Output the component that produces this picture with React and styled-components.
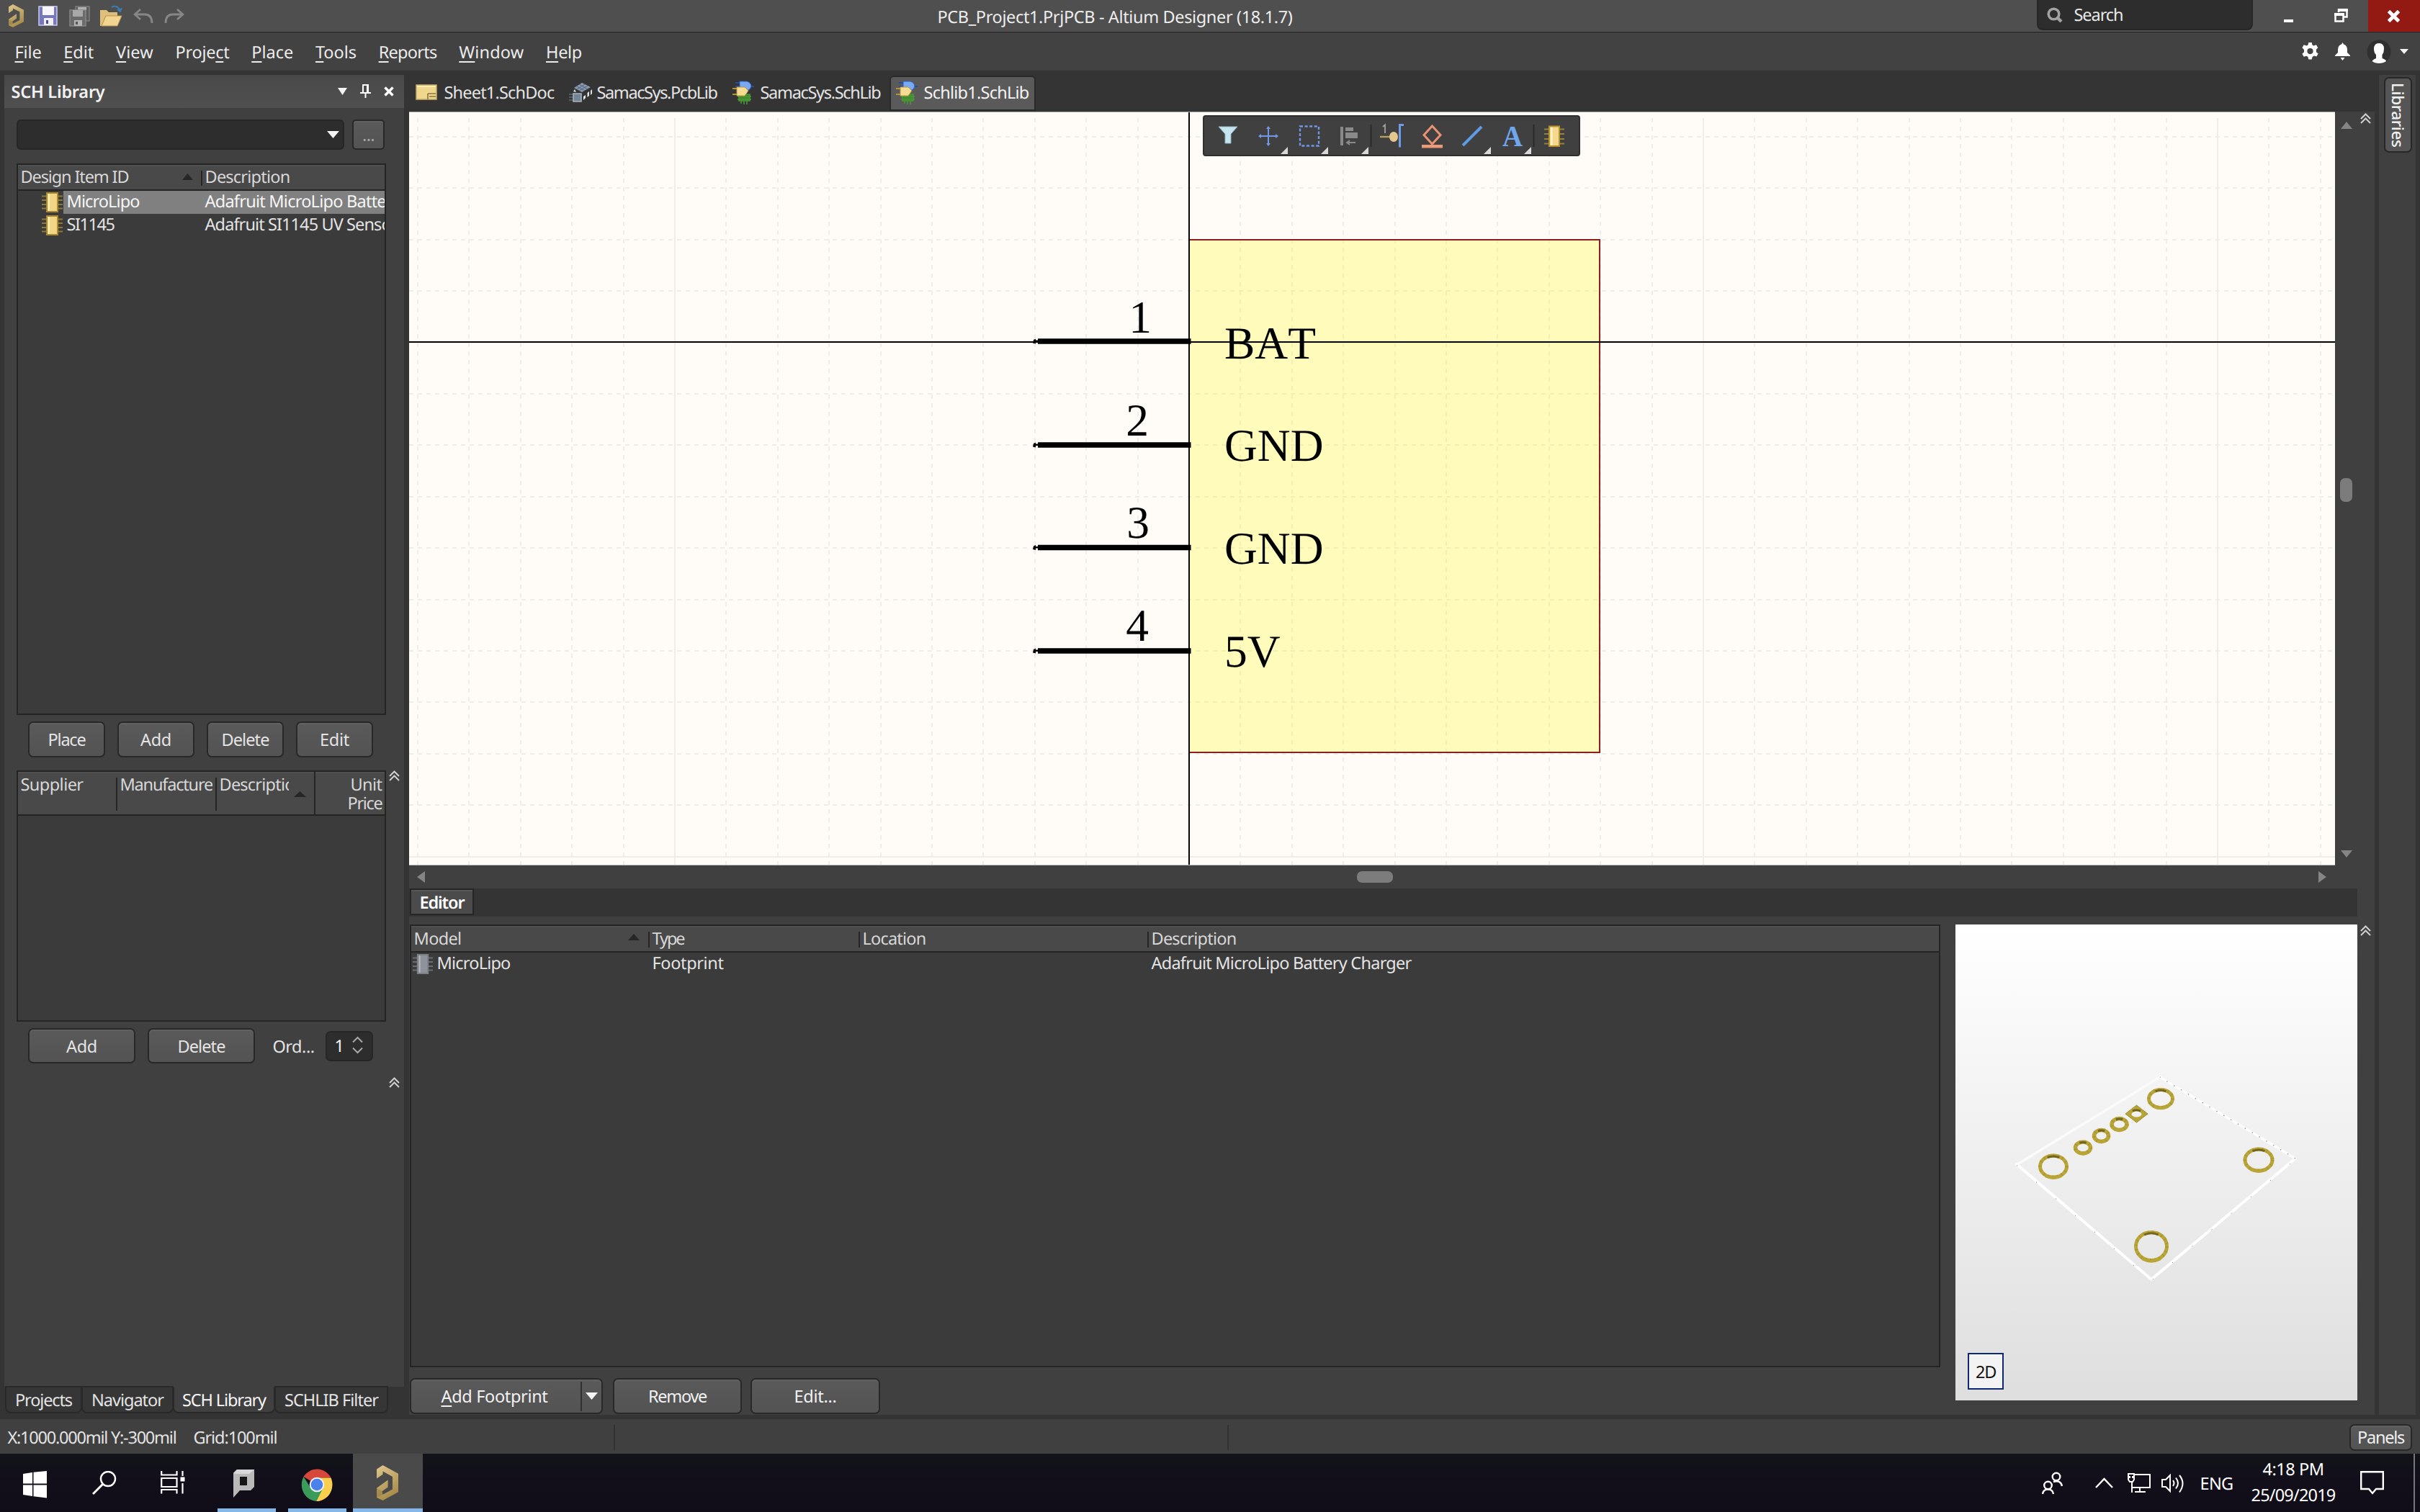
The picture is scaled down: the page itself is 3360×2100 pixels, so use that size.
import React, { useLayoutEffect, useRef, useState } from "react";
import styled, { createGlobalStyle, css } from "styled-components";

const UI = `"Noto Sans", "Open Sans", sans-serif`;

const GlobalStyle = createGlobalStyle`
  * { box-sizing: border-box; }
  html, body { margin: 0; padding: 0; background: #343434; }
  body {
    width: 3360px; height: 2100px; overflow: hidden;
    font-family: ${UI}; font-size: 23.5px; line-height: 32px; color: #e4e4e4;
    text-rendering: geometricPrecision;
  }
  svg { display: block; flex: none; }
`;

/* ---------- text ---------- */

const LabelBox = styled.span`
  display: inline-block;
  flex: none;
  white-space: nowrap;
  text-indent: -0.5px;
  font-size: ${(p) => p.$size || 23.5}px;
  font-weight: ${(p) => (p.$bold ? 600 : 400)};
  color: ${(p) => p.$color || "#e4e4e4"};
  u { text-underline-offset: 4px; text-decoration-thickness: 2px; text-decoration-skip-ink: none; }
`;

/* A caption whose tracking is adjusted so that it fills its column width. */
function Label({ w, size, bold, color, children }) {
  const inner = useRef(null);
  const [spacing, setSpacing] = useState(0);
  useLayoutEffect(() => {
    const el = inner.current;
    const count = el.textContent.length;
    const natural = el.getBoundingClientRect().width - spacing * count;
    setSpacing((w + 1 - natural) / count);
  }, [w]);
  return (
    <LabelBox $size={size} $bold={bold} $color={color} style={{ width: w }}>
      <span ref={inner} style={{ letterSpacing: spacing }}>{children}</span>
    </LabelBox>
  );
}

/* ---------- frame ---------- */

const Screen = styled.div`
  width: 3360px; height: 2100px; display: flex; flex-direction: column; overflow: hidden;
`;
const TitleBar = styled.header`
  flex: none; height: 46px; display: flex; align-items: flex-start;
  background: #4f4f4f; border-bottom: 2px solid #313131;
`;
const QuickTools = styled.div`
  width: 1302px; height: 44px; padding-left: 12px; display: flex; align-items: center;
`;
const TitleText = styled.div`padding-top: 7px; width: 1526px;`;
const SearchBox = styled.div`
  width: 300px; height: 42px; display: flex; align-items: center; padding: 0 12px; gap: 16px;
  background: #2d2d2d; border: 2px solid #272727; border-top: 0; border-radius: 0 0 8px 8px;
  svg { margin-top: 2px; }
`;
const WindowButtons = styled.div`flex: 1; height: 44px; display: flex;`;
const WindowButton = styled.div`
  height: 44px; width: ${(p) => p.$w}px; padding-left: ${(p) => p.$pad}px; padding-top: ${(p) => p.$top}px;
  background: ${(p) => p.$bg || "transparent"};
`;
const MenuBar = styled.nav`
  flex: none; height: 52px; display: flex; align-items: center; background: #424242;
  padding: 0 16px 2px 21px; gap: 31.7px; border-top: 1px solid #484848;
`;
const MenuRight = styled.div`margin-left: auto; display: flex; align-items: center;`;

const Workspace = styled.main`flex: none; height: 1873px; display: flex; background: #343434;`;

/* ---------- left panel ---------- */

const SideColumn = styled.aside`width: 568px; padding: 6px 7px 0 6px; display: flex; flex-direction: column;`;
const Panel = styled.section`height: 1822px; background: #404040; display: flex; flex-direction: column;`;
const PanelHead = styled.div`
  height: 46px; padding: 0 14px 1px 10px; display: flex; align-items: center; background: linear-gradient(#494949, #505050);
`;
const HeadTools = styled.div`margin-left: auto; display: flex; align-items: center; gap: 18px;`;
const PanelBody = styled.div`padding: 16px 0 0 17px; display: flex; flex-direction: column;`;
const Row = styled.div`
  display: flex; align-items: flex-start;
  gap: ${(p) => p.$gap || 0}px; margin-top: ${(p) => p.$mt || 0}px; padding-left: ${(p) => p.$pl || 0}px;
`;
const Combo = styled.div`
  width: 455px; height: 42px; background: #2d2d2d; border: 2px solid #262626; border-radius: 6px;
  display: flex; align-items: center; justify-content: flex-end; padding-right: 5px;
`;
const Button = styled.button`
  width: ${(p) => p.$w}px; height: ${(p) => p.$h || 50}px; padding: 0; flex: none;
  display: flex; align-items: center; justify-content: center; font: inherit;
  background: linear-gradient(#5a5a5a, #535353); border: 2px solid #282828; border-radius: ${(p) => p.$r || 7}px;
  box-shadow: inset 0 2px 0 #616161;
`;
const Table = styled.div`
  width: ${(p) => p.$w}px; height: ${(p) => p.$h}px; flex: none; overflow: hidden;
  background: #3b3b3b; border: 2px solid #242424; display: flex; flex-direction: column;
`;
const TableHead = styled.div`
  height: ${(p) => p.$h}px; flex: none; display: flex; background: #494949;
  border-bottom: 2px solid #242424; box-shadow: inset 0 2px 0 #505050;
`;
const HeadCell = styled.div`
  width: ${(p) => p.$w}px; flex: none; display: flex; align-items: flex-start; position: relative;
  padding: ${(p) => p.$top ?? 1}px ${(p) => p.$pr || 0}px 0 ${(p) => p.$pl ?? 4}px;
  justify-content: ${(p) => (p.$right ? "flex-end" : "space-between")};
  &:not(:first-child)::before {
    content: ""; position: absolute; left: -1px; width: 2px; background: #262626;
    top: ${(p) => (p.$full ? 0 : 8)}px; bottom: ${(p) => (p.$full ? 0 : 5)}px;
  }
`;
const Clip = styled.div`width: ${(p) => p.$w}px; overflow: hidden; padding-left: 2px; margin-left: -2px;`;
const Stack = styled.div`display: flex; flex-direction: column; align-items: flex-end; line-height: 26px;`;
const ItemRow = styled.div`
  height: 32px; flex: none; display: flex; align-items: center; padding-left: ${(p) => p.$pl}px;
`;
const ItemCells = styled.div`
  flex: 1; height: 32px; display: flex; align-items: center; margin-left: 1px; padding: 0 0 4px 5px;
  background: ${(p) => (p.$on ? "#808080" : "transparent")};
`;
const Cell = styled.div`width: ${(p) => p.$w}px; flex: none; height: 32px;`;
const Spinner = styled.div`
  width: 66px; height: 42px; background: #2d2d2d; border: 2px solid #262626; border-radius: 7px;
  display: flex; align-items: center; padding: 0 12px 3px 11px; justify-content: space-between;
`;
const PanelTabs = styled.div`display: flex; padding-left: 1px; margin-top: -1px;`;
const PanelTab = styled.div`
  width: ${(p) => p.$w}px; height: 38px; display: flex; justify-content: center; align-items: center;
  border: 2px solid #292929; border-radius: 0 0 8px 8px; margin-right: -1px;
  ${(p) => p.$on ? css`background: #404040; border-top-color: #404040;` : css`background: #363636;`}
`;

/* ---------- document area ---------- */

const Center = styled.div`width: 2729px; height: 1867px; display: flex; flex-direction: column;`;
const DocTabs = styled.div`height: 57px; display: flex; align-items: flex-start;`;
const DocTab = styled.div`
  width: ${(p) => p.$w}px; height: 49px; margin-top: 7px; padding: 0 0 3px 9px;
  display: flex; align-items: center; gap: ${(p) => p.$gap || 10}px;
  ${(p) => p.$on && css`background: #5a5a5a; border: 2px solid #2a2a2a; border-radius: 6px 6px 0 0; padding: 0 0 3px 7px;`}
`;
const DocRow = styled.div`flex: 1; display: flex;`;
const DocMain = styled.div`width: 2705px; display: flex; flex-direction: column;`;
const Rail = styled.div`
  width: 24px; background: #404040; padding: 2px 0 0 4px; display: flex; flex-direction: column; gap: 1113px;
`;
const CanvasRow = styled.div`height: 1047px; display: flex;`;
const Canvas = styled.div`
  width: 2674px; height: 1047px; position: relative; background: #fffcf8;
  border-top: 1px solid #a8a8a8; border-bottom: 1px solid #b8b8b8; overflow: hidden;
  > svg { margin-top: -1px; }
`;
const VScroll = styled.div`
  width: 31px; background: #404040; display: flex; flex-direction: column; align-items: center;
  justify-content: space-between; padding: 14px 1px 11px 1px;
`;
const Thumb = styled.div`
  width: ${(p) => p.$w}px; height: ${(p) => p.$h}px; border-radius: 7px; background: #7c7c7c;
`;
const HScroll = styled.div`
  height: 32px; background: #404040; display: flex; align-items: center; padding: 0 43px 0 11px;
  ${Thumb} { margin: 0 auto 0 1294px; }
`;
const FloatBar = styled.div`
  position: absolute; left: 1102px; top: 4px; width: 524px; height: 57px;
  background: #404040; border: 2px solid #2f2f2f; border-radius: 4px;
`;
const EditorStrip = styled.div`height: 39px; padding-left: 1px; background: #343434;`;
const EditorTab = styled.div`
  width: 89px; height: 37px; display: flex; align-items: center; padding-left: 12px;
  background: #4b4b4b; border: 2px solid #262626; box-shadow: inset 0 2px 0 #575757;
`;
const EditorBody = styled.div`flex: 1; background: #404040; padding: 11px 0 0 1px; display: flex; gap: 21px;`;
const EditorLeft = styled.div`width: 2125px;`;
const SplitMain = styled.div`
  width: 235px; height: 41px; display: flex; align-items: center; justify-content: center; padding: 0 6px 0 0;
  border-right: 2px solid #303030; margin-right: 5px;
`;
const SplitArrow = styled.div`margin-right: 3px;`;
const Preview = styled.div`
  width: 558px; height: 661px; position: relative; background: linear-gradient(#ffffff, #ededed 55%, #dedede);
`;
const ModeBadge = styled.div`
  position: absolute; left: 17px; top: 595px; width: 50px; height: 51px; background: #f3f3f3;
  border: 2px solid #10286e; display: flex; align-items: center; justify-content: center;
`;
const LibStrip = styled.div`
  width: 51px; height: 1861px; margin: 6px 0 0 6px; background: #404040; padding: 3px 0 0 7px;
`;
const LibButton = styled.div`
  width: 39px; height: 105px; background: #555555; border: 2px solid #272727; border-radius: 7px;
  writing-mode: vertical-rl; display: flex; align-items: center; justify-content: center;
  font-size: 22.5px; line-height: 33px; letter-spacing: -0.45px; font-weight: 500; color: #f0f0f0;
`;

/* ---------- status and taskbar ---------- */

const StatusBar = styled.div`
  flex: none; height: 48px; background: #404040; display: flex; align-items: center; padding: 2px 10px 0 11px;
`;
const StatusRule = styled.div`width: 2px; height: 35px; background: #323232; margin-left: ${(p) => p.$ml}px;`;
const Taskbar = styled.footer`
  flex: none; height: 81px; display: flex;
  background: linear-gradient(#121418, #120f1b 45%, #100d18);
`;
const TaskCell = styled.div`
  width: ${(p) => p.$w}px; height: 81px; margin-right: ${(p) => p.$mr || 0}px; padding-top: ${(p) => p.$top}px; padding-left: ${(p) => p.$pl}px;
  background: ${(p) => (p.$on ? "#4a4a4b" : "transparent")};
  border-bottom: ${(p) => (p.$run ? "5px solid #84b8ea" : "0")};
`;
const Tray = styled.div`margin-left: auto; display: flex; align-items: center; height: 81px; padding-right: 7px;`;
const TrayItem = styled.div`margin-right: ${(p) => p.$mr}px;`;
const Clock = styled.div`
  width: 116px; height: 81px; margin-right: 35px; padding-top: 5px;
  display: flex; flex-direction: column; align-items: center; gap: 4px;
`;
const DesktopEdge = styled.div`width: 2px; height: 81px; background: #77777b;`;

/* ---------- icons ---------- */

const Icon = ({ w, h, children, ...rest }) => (
  <svg width={w} height={h} viewBox={`0 0 ${w} ${h}`} fill="none" {...rest}>{children}</svg>
);

const Logo = ({ w, h }) => (
  <svg width={w} height={h} viewBox="0 0 30 54" preserveAspectRatio="none">
    <defs>
      <linearGradient id="gold" x1="0" y1="0" x2="0.4" y2="1">
        <stop offset="0" stopColor="#e0c78c" /><stop offset="1" stopColor="#a88c4c" />
      </linearGradient>
    </defs>
    <path d="M0 6 8.500 0 30 13V41L8.500 54 0 49.500V35L15.600 22.500V33.500L7.500 40 8.500 45 22 37V17.500L8.500 9.500V14L0 20.500Z" fill="url(#gold)" />
    <path d="M0 35 7.500 40 8.500 45 0 49.500Z" fill="#7d6633" opacity=".35" />
  </svg>
);

const Floppy = () => (
  <Icon w={27} h={28}>
    <path d="M1 1H26V27H1Z" fill="#7578bd" stroke="#c9caf0" strokeWidth="1.5" />
    <path d="M6 1H22V13H6Z" fill="#f7f7fb" /><path d="M8 17H21V27H8Z" fill="#f0f0f4" />
    <path d="M11 20h3v5h-3Z" fill="#4b4f8f" />
  </Icon>
);
const FloppyStack = () => (
  <Icon w={30} h={29}>
    <path d="M9 1H28V21H9Z" fill="#5c5c5c" stroke="#7e7e7e" strokeWidth="1.5" />
    <path d="M12 2h12v4H12Z" fill="#b0b0b0" />
    <path d="M1 6H23V28H1Z" fill="#6b6b6b" stroke="#868686" strokeWidth="1.5" />
    <path d="M5 6H19V15H5Z" fill="#a8a8a8" /><path d="M7 20H18V28H7Z" fill="#b4b4b4" /><path d="M9 22h3v4H9Z" fill="#555" />
  </Icon>
);
const FolderOpen = () => (
  <Icon w={32} h={30}>
    <path d="M1 7H10L13 10H25V15H9L3 29H1Z" fill="#dfc07a" />
    <path d="M9 15H31L25 29H3Z" fill="#f2d591" stroke="#b9954e" strokeWidth="1" />
    <path d="M17 3Q25-1 29 8M25 6l4 3 2-5" stroke="#3c7cb4" strokeWidth="2" />
  </Icon>
);
const Undo = ({ flip }) => (
  <Icon w={28} h={20} transform={flip ? "scale(-1,1)" : undefined}>
    <path d="M10 1 2 8 10 15M3 8H16Q26 8 26 20" stroke="#868686" strokeWidth="2.8" />
  </Icon>
);
const Magnifier = () => (
  <Icon w={22} h={22}><circle cx="9.5" cy="9.5" r="7.3" stroke="#a2a2a2" strokeWidth="3.6" /><path d="M14.5 14.5 20 20" stroke="#a2a2a2" strokeWidth="4.5" /></Icon>
);
const Tri = ({ w, h, dir = "down", c = "#f4f4f4" }) => (
  <Icon w={w} h={h}>
    <path fill={c} d={{ down: `M0 0H${w}L${w / 2} ${h}Z`, up: `M0 ${h}H${w}L${w / 2} 0Z`, left: `M${w} 0V${h}L0 ${h / 2}Z`, right: `M0 0V${h}L${w} ${h / 2}Z` }[dir]} />
  </Icon>
);
const Collapse = () => (
  <Icon w={15} h={15}><path d="M1 8 7.5 1.5 14 8M1 14 7.5 7.5 14 14" stroke="#cfcfcf" strokeWidth="2" /></Icon>
);
const Cross = ({ w, h, sw }) => (
  <Icon w={w} h={h}><path d={`M1.5 1.5 ${w - 1.5} ${h - 1.5}M${w - 1.5} 1.5 1.5 ${h - 1.5}`} stroke="#fff" strokeWidth={sw} /></Icon>
);
const Pin = () => (
  <Icon w={15} h={19}><path d="M3 1H11V11M4 1V11" stroke="#fff" strokeWidth="2" /><path d="M9 1h3v10H9ZM0 11h15v2H0ZM6.5 12h2v7h-2Z" fill="#fff" /></Icon>
);
const Gear = () => (
  <Icon w={25} h={25}>
    <path fillRule="evenodd" fill="#fff" d="M10.3 0h4.4l.8 3.4 2 1 3.4-1.2 2.4 4-2.4 2.6v3.4l2.8 2.4-2.3 4-3.6-1-2.2 1.3-.9 3.6h-4.4l-.9-3.6-2-1.2-3.7 1-2.3-4L4 13.2V10L1.400 7.200l2.400-4 3.500 1.200 2.200-1ZM12.500 8a4 4 0 1 0 0 8.200 4 4 0 1 0 0-8.200Z" />
  </Icon>
);
const Bell = () => (
  <Icon w={21} h={25}><path fill="#fff" d="M10.500 0 12 2.500Q17 4 17 10V14L21 18V19H0V18L4 14V10Q4 4 9 2.500ZM7.500 21H13.500L10.500 25Z" /></Icon>
);
const User = () => (
  <Icon w={34} h={34}>
    <circle cx="17" cy="17" r="16.500" fill="#303030" />
    <path fill="#fff" d="M17 5Q24 5 24 13 24 18 21.500 21V26Q27 28 27 30 23 33 17 33 11 33 7.500 30 8 28 13 26V21Q10 18 10 13 10 5 17 5Z" />
  </Icon>
);
const Chip = ({ w = 29, h = 28, body = "#f3d483", edge = "#a9882f", lead = "#8f7a35", hi = "#fff0c0" }) => (
  <svg width={w} height={h} viewBox="0 0 29 28" preserveAspectRatio="none">
    <path d="M0 5.500H29M0 11H29M0 17H29M0 22.500H29" stroke={lead} strokeWidth="2" />
    <path d="M7 1H22V27H7Z" fill={body} stroke={edge} strokeWidth="2" /><path d="M9 2h2v24H9Z" fill={hi} />
  </svg>
);
const SheetIcon = () => (
  <Icon w={30} h={22}>
    <path d="M1 1H29V21H1Z" fill="#efd88e" stroke="#c8ad66" strokeWidth="1.5" /><path d="M2 2H28V4H2Z" fill="#fbedb9" />
    <path d="M17 13H28M17 13V21M19 17H28" stroke="#85733c" strokeWidth="1.600" />
  </Icon>
);
const PcbLibIcon = () => (
  <Icon w={32} h={27}>
    <path d="M18 0 30 6 18 13 7 7Z" fill="#8a9bb0" /><path d="M14 2 26 9M10 4.500 22 11M22 2 11 9M26 4 14 11" stroke="#53647a" strokeWidth="1" />
    <path d="M32 9V15L30 17V11ZM28 12V18L25.500 20V14ZM8 9 6 12 10 13Z" fill="#dfe3e6" /><path d="M20 19 23 17V21L20 24Z" fill="#e8eaec" />
    <path d="M0 16H18M0 20H18M0 24H18" stroke="#5e676f" strokeWidth="1.500" /><path d="M6 15H17V26H6Z" fill="#748696" stroke="#a8b4be" strokeWidth="1.500" />
  </Icon>
);
const SchLibIcon = () => (
  <Icon w={30} h={33}>
    <path d="M4 3H12M22 8H30M4 8H10" stroke="#294c9a" strokeWidth="2" /><path d="M10 1H20Q26 3 26 8 25 13 20 14H10Z" fill="#78a9f2" stroke="#2f5fb8" />
    <path d="M9 19H24V28H9ZM12 28V32M16 28V33M20 28V33M7 22H26M7 26H26" fill="#3d8b2c" stroke="#4b9637" strokeWidth="1.600" />
    <path d="M0 11H8M0 19H8" stroke="#b1933e" strokeWidth="2" /><path d="M6 9H17L22 14 17 21H6Z" fill="#f6dc92" stroke="#b8993f" />
  </Icon>
);
const Corner = ({ x, y }) => <path d={`M${x} ${y}V${y - 10}L${x - 10} ${y}Z`} fill="#d9d9d9" />;

const ToolGlyphs = () => (
  <Icon w={520} h={53}>
    <path d="M20 14H46L37 24V37H29V24Z" fill="#c6e4f0" stroke="#8fb6c8" strokeWidth="1" />
    <g stroke="#7397e6" strokeWidth="2" fill="#7397e6">
      <path d="M89 15V39M77 27H101" /><path d="M86 17 89 13 92 17ZM86 37 89 41 92 37ZM79 24 75 27 79 30ZM99 24 103 27 99 30Z" stroke="none" />
    </g>
    <path d="M133 13.500H159V40.500H133Z" stroke="#7397e6" strokeWidth="2.400" strokeDasharray="4 2.600" />
    <path d="M189 14h4v26h-4ZM196 15h11v5h-11ZM196 22h17v8h-17Z" fill="#8a8a8a" />
    <path d="M198 36H210M202 33 198 36 202 39" stroke="#8a8a8a" strokeWidth="2" />
    <path d="M231.500 11V42M457.500 11V42" stroke="#2a2a2a" strokeWidth="2" />
    <path d="M248 14 251 11.500V23" stroke="#9a9a9a" strokeWidth="2" />
    <path d="M244 28H260" stroke="#b69d62" strokeWidth="2.400" /><ellipse cx="263" cy="28" rx="6" ry="7" fill="#e5c88c" />
    <path d="M277 11.500H271.500V42.500" stroke="#6f9be8" strokeWidth="3" />
    <path d="M316.500 13 328 25.500 316.500 38 305 25.500Z" stroke="#ea9272" strokeWidth="3" /><path d="M302 39h29v4.500h-29Z" fill="#ee9a7a" />
    <path d="M359 40 385 14" stroke="#5f9ae4" strokeWidth="4" />
    <text x="414" y="41" fontFamily="Liberation Serif, serif" fontWeight="700" fontSize="41" textLength="28" lengthAdjust="spacingAndGlyphs" fill="#6fa6ec">A</text>
    <Corner x={116} y={52} /><Corner x={172} y={52} /><Corner x={228} y={52} /><Corner x={398} y={52} /><Corner x={454} y={52} />
    <path d="M472 17.500H500M472 24H500M472 31H500M472 37.500H500" stroke="#95803c" strokeWidth="2" />
    <path d="M479 13.500H493V41H479Z" fill="#f5d88c" stroke="#b6922f" strokeWidth="2" /><path d="M481 15H483.500V40H481Z" fill="#fff3cb" />
  </Icon>
);

/* ---------- schematic drawing ---------- */

const PINS = [
  { n: "1", x: 1031, y: 319, ny: 307, name: "BAT", ty: 342.5 },
  { n: "2", x: 1027, y: 463, ny: 449.5, name: "GND", ty: 485 },
  { n: "3", x: 1028, y: 605.5, ny: 592, name: "GND", ty: 627.5 },
  { n: "4", x: 1027, y: 749, ny: 735, name: "5V", ty: 770.5 },
];
const STEP = 71.4;

function Schematic() {
  const cols = Array.from({ length: 38 }, (_, i) => ({ x: Math.round(12 + i * STEP), major: i % 10 === 5 }));
  const rows = Array.from({ length: 15 }, (_, i) => ({ y: Math.round(35 + i * STEP), major: i % 10 === 4 }));
  const grid = (color) => (
    <g stroke={color} strokeWidth="2">
      {cols.map((c) => <path key={c.x} d={`M${c.x} 9V1047`} strokeDasharray={c.major ? undefined : "6 6"} />)}
      {rows.map((r) => <path key={r.y} d={`M0 ${r.y}H2674`} strokeDasharray={r.major ? undefined : "6 6"} />)}
    </g>
  );
  return (
    <Icon w={2674} h={1047}>
      {grid("#eeedea")}
      <clipPath id="body"><path d="M1083 178H1653V890H1083Z" /></clipPath>
      <path d="M1083 178H1653V890H1083Z" fill="#fffbbb" />
      <g clipPath="url(#body)">{grid("#f3efb2")}</g>
      <path d="M1083 178H1653V890H1083Z" stroke="#8c2020" strokeWidth="2" />
      <path d="M1083 0V1047M0 320H2674" stroke="#060606" strokeWidth="2" />
      {PINS.map((p) => (
        <g key={p.n} fill="#000">
          <path d={`M873 ${p.y}H1085.500`} stroke="#000" strokeWidth="7.500" />
          <path d={`M867 ${p.y - 2}l3-1.500v2h4v2.500h-4v2.500l-4-1Z`} />
          <g fontFamily="Liberation Serif, Times New Roman, serif" fontSize="63.500" style={{ fontKerning: "none" }}>
            <text x={p.x} y={p.ny} textAnchor="end">{p.n}</text>
            <text x="1132" y={p.ty}>{p.name}</text>
          </g>
        </g>
      ))}
    </Icon>
  );
}

const RINGS = [
  [285, 242, 16.500, 12.500, 5], [136, 336, 18.500, 15, 5], [421, 327, 19, 15, 5], [272, 447, 21.500, 19.500, 5],
  [177, 310, 10.500, 8, 5.500], [202.500, 293.500, 10, 8, 5.500], [227.500, 277.500, 10.500, 8, 5.500],
];

const Footprint = () => (
  <Icon w={558} h={661}>
    <path d="M284 212 86 333" stroke="#fbfbfb" strokeWidth="3.500" strokeLinecap="round" />
    <path d="M85 333 272 493 472 325" stroke="#fff" strokeWidth="4" strokeLinecap="round" />
    <path d="M472 325 284 212" stroke="#fdfdfd" strokeWidth="3.500" strokeLinecap="round" />
    <path d="M472 325 284 212" stroke="#9a9a9a" strokeWidth="1.500" strokeDasharray="1.500 10" />
    <path d="M85 333 272 493 472 325" transform="translate(0 1.500)" stroke="#8a8a8a" strokeWidth="1" strokeDasharray="1.500 34" />
    {RINGS.map(([x, y, rx, ry, s]) => (
      <g key={x}>
        <ellipse cx={x} cy={y} rx={rx} ry={ry} stroke="#baa537" strokeWidth={s} />
        <ellipse cx={x} cy={y} rx={rx} ry={ry} stroke="#9a8729" strokeWidth={s} strokeDasharray="1.500 5" opacity=".45" />
        <path d={`M${x - rx * 0.45} ${y - ry * 0.82}Q${x} ${y - ry * 1.05} ${x + rx * 0.45} ${y - ry * 0.82}`} stroke="#75661e" strokeWidth="3" />
        <path d={`M${x - rx * 0.6} ${y + ry * 0.9}Q${x} ${y + ry * 1.25} ${x + rx * 0.6} ${y + ry * 0.9}`} stroke="#baa537" strokeWidth="3.500" />
      </g>
    ))}
    <path fill="#b9a536" stroke="#a08d2c" strokeWidth="1" d="M251.500 251 267 263 251.500 275 236 263Z" />
    <path d="M246 259Q251 257 257 259" stroke="#6f611c" strokeWidth="3" />
    <ellipse cx="251.500" cy="263.500" rx="7" ry="4" fill="#f2f2f2" />
  </Icon>
);

/* ---------- sections ---------- */

const MENU = [
  [36, <><u>F</u>ile</>], [41, <><u>E</u>dit</>], [51, <><u>V</u>iew</>], [74, <>Proje<u>c</u>t</>], [57, <><u>P</u>lace</>],
  [56, <><u>T</u>ools</>], [80, <><u>R</u>eports</>], [89, <><u>W</u>indow</>], [49, <><u>H</u>elp</>],
];

function SchLibraryPanel() {
  return (
    <SideColumn>
      <Panel>
        <PanelHead>
          <Label w={129} bold color="#f2f2f2">SCH Library</Label>
          <HeadTools><Tri w={13} h={10} /><Pin /><Cross w={14} h={14} sw={3.5} /></HeadTools>
        </PanelHead>
        <PanelBody>
          <Row $gap={11}>
            <Combo><Tri w={17} h={10} /></Combo>
            <Button $w={45} $h={42} $r={5}><Label w={16} color="#a8a8a8">...</Label></Button>
          </Row>
          <Row $mt={19}>
            <Table $w={513} $h={766}>
              <TableHead $h={36}>
                <HeadCell $w={255} $top={0} $pr={12}>
                  <Label w={149} color="#d8d8d8">Design Item ID</Label>
                  <Row $mt={12}><Tri w={15} h={9} dir="up" c="#262626" /></Row>
                </HeadCell>
                <HeadCell $w={254} $top={0} $pl={5}><Label w={117} color="#d8d8d8">Description</Label></HeadCell>
              </TableHead>
              <ItemRow $pl={33}>
                <Chip />
                <ItemCells $on><Cell $w={192}><Label w={100} color="#f6f6f6">MicroLipo</Label></Cell><Label w={360} color="#f6f6f6">Adafruit MicroLipo Battery Charger</Label></ItemCells>
              </ItemRow>
              <ItemRow $pl={33}>
                <Chip />
                <ItemCells><Cell $w={192}><Label w={65}>SI1145</Label></Cell><Label w={266}>Adafruit SI1145 UV Sensor</Label></ItemCells>
              </ItemRow>
            </Table>
          </Row>
          <Row $mt={9} $pl={16} $gap={17}>
            <Button $w={107}><Label w={51}>Place</Label></Button>
            <Button $w={107}><Label w={42}>Add</Label></Button>
            <Button $w={107}><Label w={65}>Delete</Label></Button>
            <Button $w={107}><Label w={40}>Edit</Label></Button>
          </Row>
          <Row $mt={18} $gap={4}>
            <Table $w={513} $h={349}>
              <TableHead $h={61}>
                <HeadCell $w={137}><Label w={86} color="#d8d8d8">Supplier</Label></HeadCell>
                <HeadCell $w={138} $pl={5}><Clip $w={130}><Label w={136} color="#d8d8d8">Manufacturer</Label></Clip></HeadCell>
                <HeadCell $w={137} $pl={5} $pr={12}>
                  <Clip $w={98}><Label w={117} color="#d8d8d8">Description</Label></Clip>
                  <Row $mt={26}><Tri w={17} h={8} dir="up" c="#262626" /></Row>
                </HeadCell>
                <HeadCell $w={97} $full $right $pr={4} $top={4}>
                  <Stack><Label w={43} color="#d8d8d8">Unit</Label><Label w={47} color="#d8d8d8">Price</Label></Stack>
                </HeadCell>
              </TableHead>
            </Table>
            <Collapse />
          </Row>
          <Row $mt={9} $pl={16}>
            <Button $w={149} $h={49}><Label w={42}>Add</Label></Button>
            <Row $pl={17}><Button $w={149} $h={49}><Label w={65}>Delete</Label></Button></Row>
            <Row $pl={25} $mt={9}><Label w={57}>Ord...</Label></Row>
            <Row $pl={16} $mt={4}>
              <Spinner>
                <Label w={10} color="#f2f2f2">1</Label>
                <Icon w={15} h={25}><path d="M1 8.500 7.500 2 14 8.500M1 16.500 7.500 23 14 16.500" stroke="#a8a8a8" strokeWidth="2" /></Icon>
              </Spinner>
            </Row>
          </Row>
          <Row $mt={19} $pl={517}><Collapse /></Row>
        </PanelBody>
      </Panel>
      <PanelTabs>
        <PanelTab $w={107}><Label w={78}>Projects</Label></PanelTab>
        <PanelTab $w={128}><Label w={99}>Navigator</Label></PanelTab>
        <PanelTab $on $w={142}><Label w={115} color="#f6f6f6">SCH Library</Label></PanelTab>
        <PanelTab $w={158}><Label w={129}>SCHLIB Filter</Label></PanelTab>
      </PanelTabs>
    </SideColumn>
  );
}

function EditorArea() {
  return (
    <>
      <EditorStrip><EditorTab><Label w={61} bold color="#fff">Editor</Label></EditorTab></EditorStrip>
      <EditorBody>
        <EditorLeft>
          <Table $w={2125} $h={615}>
            <TableHead $h={37}>
              <HeadCell $w={330} $pr={13}>
                <Label w={65} color="#d8d8d8">Model</Label>
                <Row $mt={10}><Tri w={16} h={9} dir="up" c="#262626" /></Row>
              </HeadCell>
              <HeadCell $w={292} $pl={5}><Label w={43} color="#d8d8d8">Type</Label></HeadCell>
              <HeadCell $w={401} $pl={5}><Label w={87} color="#d8d8d8">Location</Label></HeadCell>
              <HeadCell $w={1096} $pl={5}><Label w={117} color="#d8d8d8">Description</Label></HeadCell>
            </TableHead>
            <ItemRow $pl={2}>
              <Chip w={28} body="#8e939b" edge="#7b7f86" lead="#6a6d72" hi="#b4b9c0" />
              <ItemCells>
                <Cell $w={299}><Label w={101}>MicroLipo</Label></Cell>
                <Cell $w={693}><Label w={98}>Footprint</Label></Cell>
                <Label w={360}>Adafruit MicroLipo Battery Charger</Label>
              </ItemCells>
            </ItemRow>
          </Table>
          <Row $mt={15}>
            <Button $w={268} $h={50}>
              <SplitMain><Label w={147} color="#f2f2f2"><u>A</u>dd Footprint</Label></SplitMain>
              <SplitArrow><Tri w={17} h={10} /></SplitArrow>
            </Button>
            <Row $pl={14}><Button $w={179} $h={50}><Label w={80} color="#f2f2f2">Remove</Label></Button></Row>
            <Row $pl={12}><Button $w={180} $h={50}><Label w={58} color="#f2f2f2">Edit...</Label></Button></Row>
          </Row>
        </EditorLeft>
        <Preview>
          <Footprint />
          <ModeBadge><Label w={27} color="#111">2D</Label></ModeBadge>
        </Preview>
      </EditorBody>
    </>
  );
}

export default function App() {
  return (
    <Screen>
      <GlobalStyle />
      <TitleBar>
        <QuickTools>
          <Logo w={21} h={32} />
          <Row $pl={20}><Floppy /></Row>
          <Row $pl={16}><FloppyStack /></Row>
          <Row $pl={12}><FolderOpen /></Row>
          <Row $pl={15}><Undo /></Row>
          <Row $pl={15}><Undo flip /></Row>
        </QuickTools>
        <TitleText><Label w={492} color="#ededed">PCB_Project1.PrjPCB - Altium Designer (18.1.7)</Label></TitleText>
        <SearchBox><Magnifier /><Label w={67} color="#e8e8e8">Search</Label></SearchBox>
        <WindowButtons>
          <WindowButton $w={92} $pad={43} $top={27}><Icon w={13} h={4}><path d="M0 0H13V4H0Z" fill="#fff" /></Icon></WindowButton>
          <WindowButton $w={68} $pad={21} $top={12}>
            <Icon w={19} h={19}><path d="M6 5V1.500H17.500V11.500H13M1.500 7.500H12.500V17.500H1.500Z" stroke="#fff" strokeWidth="2.500" /><path d="M5 0H19V4H5ZM0 6H14V10H0Z" fill="#fff" /></Icon>
          </WindowButton>
          <WindowButton $w={72} $pad={27} $top={14} $bg="#921a12"><Cross w={17} h={17} sw={5} /></WindowButton>
        </WindowButtons>
      </TitleBar>
      <MenuBar>
        {MENU.map(([w, text]) => <Label key={w} w={w} color="#ececec">{text}</Label>)}
        <MenuRight>
          <Gear />
          <Row $pl={22}><Bell /></Row>
          <Row $pl={23}><User /></Row>
          <Row $pl={12}><Tri w={12} h={7} /></Row>
        </MenuRight>
      </MenuBar>

      <Workspace>
        <SchLibraryPanel />
        <Center>
          <DocTabs>
            <DocTab $w={213}><SheetIcon /><Label w={152}>Sheet1.SchDoc</Label></DocTab>
            <DocTab $w={227} $gap={7}><PcbLibIcon /><Label w={166}>SamacSys.PcbLib</Label></DocTab>
            <DocTab $w={227} $gap={9}><SchLibIcon /><Label w={166}>SamacSys.SchLib</Label></DocTab>
            <DocTab $w={203} $gap={9} $on><SchLibIcon /><Label w={145} color="#f4f4f4">Schlib1.SchLib</Label></DocTab>
          </DocTabs>
          <DocRow>
            <DocMain>
              <CanvasRow>
                <Canvas>
                  <Schematic />
                  <FloatBar><ToolGlyphs /></FloatBar>
                </Canvas>
                <VScroll>
                  <Tri w={16} h={10} dir="up" c="#858585" />
                  <Thumb $w={17} $h={33} />
                  <Tri w={16} h={10} c="#858585" />
                </VScroll>
              </CanvasRow>
              <HScroll>
                <Tri w={11} h={16} dir="left" c="#858585" />
                <Thumb $w={50} $h={16} />
                <Tri w={11} h={16} dir="right" c="#858585" />
              </HScroll>
              <EditorArea />
            </DocMain>
            <Rail><Collapse /><Collapse /></Rail>
          </DocRow>
        </Center>
        <LibStrip><LibButton>Libraries</LibButton></LibStrip>
      </Workspace>

      <StatusBar>
        <Label w={233}>X:1000.000mil Y:-300mil</Label>
        <Row $pl={25}><Label w={115}>Grid:100mil</Label></Row>
        <StatusRule $ml={468} />
        <StatusRule $ml={850} />
        <Row $pl={1556}><Button $w={87} $h={37}><Label w={64} color="#f0f0f0">Panels</Label></Button></Row>
      </StatusBar>

      <Taskbar>
        <TaskCell $w={97} $pl={32} $top={24}>
          <Icon w={33} h={38}><path fill="#fff" d="M0 4 13 2V17.500H0ZM14.500 1.800 33 0V17.500H14.500ZM0 19.500H13V35L0 33ZM14.500 19.500H33V37.500L14.500 35.300Z" /></Icon>
        </TaskCell>
        <TaskCell $w={95} $pl={31} $top={24}>
          <Icon w={34} h={34}><circle cx="22" cy="11" r="10" stroke="#fff" strokeWidth="2.400" /><path d="M14.500 18.500 1 32" stroke="#fff" strokeWidth="3" /></Icon>
        </TaskCell>
        <TaskCell $w={96} $pl={31} $top={24} $mr={14}>
          <Icon w={34} h={32}>
            <path d="M1.200 0V5.500H22.500V0M1.200 10H22.500V22H1.200ZM1.200 31.500V26H22.500V31.500M30.500 0V7M30.500 17V31.500" stroke="#fff" strokeWidth="2.200" /><path d="M27.500 8.500h6v6h-6Z" fill="#fff" />
          </Icon>
        </TaskCell>
        <TaskCell $w={81} $pl={22} $top={22} $mr={17} $run>
          <Icon w={29} h={40}>
            <path d="M5 0H29V24L24 29H9L0 39V5Z" fill="#b9b9b9" /><path d="M5 0H29L22 6H4L0 5Z" fill="#d9d9d9" /><path d="M9 10H19V22H9Z" fill="#161616" />
          </Icon>
        </TaskCell>
        <TaskCell $w={81} $pl={18} $top={20} $mr={9} $run>
          <svg width="44" height="46" viewBox="0 0 44 46" preserveAspectRatio="none">
            <path d="M22 23 3.500 12A22 22.500 0 0 1 41.500 13.500H22Z" fill="#d5483b" />
            <path d="M22 13.500H41.500A22 23 0 0 1 21 46L30 28Z" fill="#f9cf4d" />
            <path d="M3.500 12A22 23 0 0 0 21 46L30.500 28 13 27Z" fill="#3b9c5a" />
            <circle cx="22" cy="23" r="10.300" fill="#eef1f4" /><circle cx="22" cy="23" r="8.300" fill="#4b82ea" />
          </svg>
        </TaskCell>
        <TaskCell $w={97} $pl={33} $top={16} $run $on><Logo w={30} h={49} /></TaskCell>
        <Tray>
          <TrayItem $mr={45}>
            <Icon w={29} h={32} stroke="#fff" strokeWidth="2.400"><circle cx="20" cy="7" r="5.300" /><circle cx="8.500" cy="19" r="5.300" /><path d="M1 31Q2 24.500 8.500 24.500 15 24.500 16 31M16 14Q26 11 28 20" /></Icon>
          </TrayItem>
          <TrayItem $mr={20}><Icon w={25} h={15}><path d="M1 14 12.500 2 24 14" stroke="#fff" strokeWidth="2.400" /></Icon></TrayItem>
          <TrayItem $mr={15}>
            <Icon w={32} h={28} stroke="#fff" strokeWidth="2"><path d="M9 2H31V20H6V12M17 20V26M10 26H25M6 20V27" /><path d="M1 1H9V9L7 12H3L1 9ZM3 4v3M7 4v3" /></Icon>
          </TrayItem>
          <TrayItem $mr={21}>
            <Icon w={33} h={28} stroke="#fff" strokeWidth="2"><path d="M1 9H6L12 3V25L6 19H1Z" /><path d="M16 10Q19 14 16 18M20 6.500Q26 14 20 21.500M25 3Q34 14 25 26.500" /></Icon>
          </TrayItem>
          <TrayItem $mr={26}><Label w={45} color="#fff">ENG</Label></TrayItem>
          <Clock><Label w={84} color="#fff">4:18 PM</Label><Label w={116} color="#fff">25/09/2019</Label></Clock>
          <TrayItem $mr={41}><Icon w={33} h={33}><path d="M1.200 1.200H31.800V25H22L17 31 12 25H1.200Z" stroke="#fff" strokeWidth="2.400" /></Icon></TrayItem>
          <DesktopEdge />
        </Tray>
      </Taskbar>
    </Screen>
  );
}
